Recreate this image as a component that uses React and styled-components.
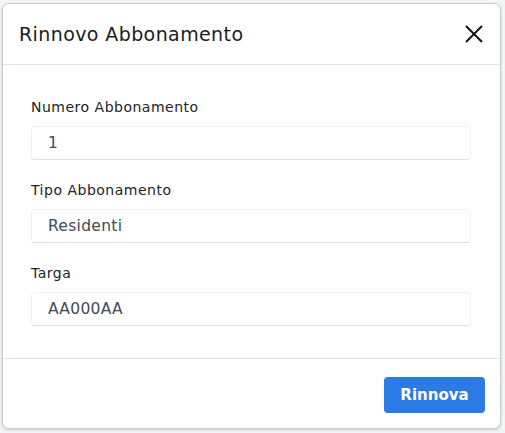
import React from 'react';
import styled, { createGlobalStyle } from 'styled-components';

const GlobalStyle = createGlobalStyle`
  html, body {
    margin: 0;
    padding: 0;
    background: #f4f5f7;
  }
  body {
    font-family: 'DejaVu Sans', 'Open Sans', sans-serif;
  }
`;

const Page = styled.div`
  width: 505px;
  height: 433px;
  padding: 3px 4px 4px 2px;
  box-sizing: border-box;
`;

const Modal = styled.div`
  height: 100%;
  background: #fff;
  border: 1px solid #c9cbcf;
  border-radius: 7px;
  box-shadow: 0 1px 3px rgba(0, 0, 0, 0.18);
  display: flex;
  flex-direction: column;
  box-sizing: border-box;
`;

const Header = styled.div`
  height: 61px;
  display: flex;
  align-items: center;
  justify-content: space-between;
  padding: 0 14px 0 16px;
  border-bottom: 1px solid #dee3ea;
  box-sizing: border-box;
  flex-shrink: 0;
`;

const Title = styled.h2`
  margin: 0;
  font-size: 19px;
  font-weight: 400;
  letter-spacing: 0.4px;
  color: #1b1b1f;
`;

const CloseButton = styled.button`
  border: 0;
  background: none;
  padding: 0;
  width: 24px;
  height: 24px;
  display: flex;
  align-items: center;
  justify-content: center;
  cursor: pointer;
`;

const Body = styled.div`
  flex: 1;
  padding: 33px 29px 0 28px;
  display: flex;
  flex-direction: column;
  gap: 21px;
`;

const Field = styled.div`
  display: flex;
  flex-direction: column;
  gap: 10px;
`;

const Label = styled.label`
  font-size: 14px;
  letter-spacing: 0.5px;
  color: #222327;
  line-height: 18px;
`;

const Input = styled.div`
  height: 34px;
  flex-shrink: 0;
  box-sizing: border-box;
  border: 1px solid #eef1f5;
  border-bottom-color: #d9e2ec;
  border-radius: 4px;
  padding: 0 16px;
  display: flex;
  align-items: center;
  font-size: 15.5px;
  letter-spacing: 0.3px;
  color: #3f4a5a;
`;

const Footer = styled.div`
  height: 70px;
  border-top: 1px solid #dee3ea;
  display: flex;
  align-items: center;
  justify-content: flex-end;
  padding: 0 15px;
  box-sizing: border-box;
  flex-shrink: 0;
`;

const PrimaryButton = styled.button`
  width: 101px;
  height: 36px;
  border: 0;
  border-radius: 4px;
  background: #2c7be5;
  color: #fff;
  font-family: inherit;
  font-size: 15px;
  font-weight: 700;
  cursor: pointer;
  margin-top: 2px;
`;

const fields = [
  { label: 'Numero Abbonamento', value: '1' },
  { label: 'Tipo Abbonamento', value: 'Residenti' },
  { label: 'Targa', value: 'AA000AA' },
];

const App = () => (
  <>
    <GlobalStyle />
    <Page>
      <Modal>
        <Header>
          <Title>Rinnovo Abbonamento</Title>
          <CloseButton aria-label="Chiudi">
            <svg width="18" height="18" viewBox="0 0 18 18">
              <path d="M1 1L17 17M17 1L1 17" stroke="#111" strokeWidth="2" />
            </svg>
          </CloseButton>
        </Header>
        <Body>
          {fields.map(f => (
            <Field key={f.label}>
              <Label>{f.label}</Label>
              <Input>{f.value}</Input>
            </Field>
          ))}
        </Body>
        <Footer>
          <PrimaryButton>Rinnova</PrimaryButton>
        </Footer>
      </Modal>
    </Page>
  </>
);

export default App;
